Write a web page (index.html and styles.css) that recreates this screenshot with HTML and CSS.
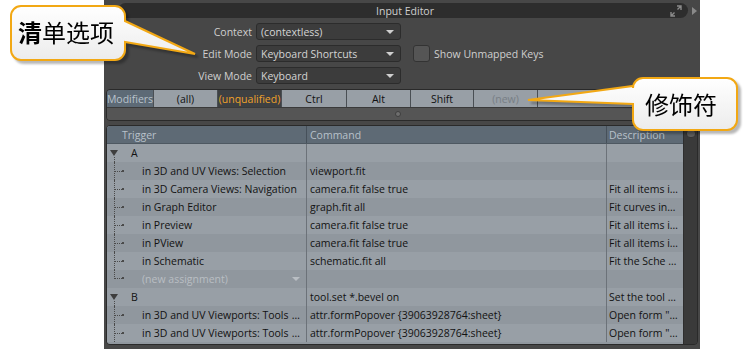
FILE: index.html
```html
<!DOCTYPE html>
<html lang="en">
<head>
  <meta charset="UTF-8">
  <title>Input Editor</title>
  <link rel="stylesheet" href="styles.css">
</head>
<body>
  <div class="stage">
    <div class="panel">
      <div class="titlewrap">
        <div class="titlebar">
          <span class="title">Input Editor</span>
          <svg class="expand" width="12" height="12" viewBox="0 0 12 12">
            <path d="M7 1h4v4M11 1L7.5 4.5M5 11H1V7M1 11l3.5-3.5" fill="none" stroke="#8a8a8a" stroke-width="1.4"/>
          </svg>
        </div>
        <span class="tb-arrow"></span>
      </div>

      <div class="fields">
        <label class="flabel">Context</label>
        <div class="dropdown">(contextless)<span class="caret"></span></div>
        <span></span>

        <label class="flabel">Edit Mode</label>
        <div class="dropdown">Keyboard Shortcuts<span class="caret"></span></div>
        <div class="check"><span class="box"></span>Show Unmapped Keys</div>

        <label class="flabel">View Mode</label>
        <div class="dropdown">Keyboard<span class="caret"></span></div>
        <span></span>
      </div>

      <div class="modbox">
        <div class="modrow">
          <span class="mod head">Modifiers</span>
          <span class="mod w64">(all)</span>
          <span class="mod w64 active">(unqualified)</span>
          <span class="mod w65">Ctrl</span>
          <span class="mod w64">Alt</span>
          <span class="mod w63">Shift</span>
          <span class="mod w64 muted">(new)</span>
          <span class="mod rest"></span>
        </div>
        <div class="splitter"><span class="knob"></span></div>
      </div>

      <div class="table">
        <div class="grid">
          <div class="row header">
            <span class="cell trig">Trigger</span>
            <span class="cell cmd">Command</span>
            <span class="cell desc">Description</span>
          </div>

          <div class="row light">
            <span class="cell trig"><span class="exp"><span class="tri"></span></span><span class="key">A</span></span>
            <span class="cell cmd"></span>
            <span class="cell desc"></span>
          </div>
          <div class="row dark">
            <span class="cell trig"><span class="branch"></span><span class="name">in 3D and UV Views: Selection</span></span>
            <span class="cell cmd">viewport.fit</span>
            <span class="cell desc"></span>
          </div>
          <div class="row light">
            <span class="cell trig"><span class="branch"></span><span class="name">in 3D Camera Views: Navigation</span></span>
            <span class="cell cmd">camera.fit false true</span>
            <span class="cell desc">Fit all items i…</span>
          </div>
          <div class="row dark">
            <span class="cell trig"><span class="branch"></span><span class="name">in Graph Editor</span></span>
            <span class="cell cmd">graph.fit all</span>
            <span class="cell desc">Fit curves in…</span>
          </div>
          <div class="row light">
            <span class="cell trig"><span class="branch"></span><span class="name">in Preview</span></span>
            <span class="cell cmd">camera.fit false true</span>
            <span class="cell desc">Fit all items i…</span>
          </div>
          <div class="row dark">
            <span class="cell trig"><span class="branch"></span><span class="name">in PView</span></span>
            <span class="cell cmd">camera.fit false true</span>
            <span class="cell desc">Fit all items i…</span>
          </div>
          <div class="row light">
            <span class="cell trig"><span class="branch"></span><span class="name">in Schematic</span></span>
            <span class="cell cmd">schematic.fit all</span>
            <span class="cell desc">Fit the Sche …</span>
          </div>
          <div class="row dark">
            <span class="cell trig"><span class="branch last"></span><span class="name ghost">(new assignment)</span><span class="mini-caret"></span></span>
            <span class="cell cmd"></span>
            <span class="cell desc"></span>
          </div>
          <div class="row light">
            <span class="cell trig"><span class="exp"><span class="tri"></span></span><span class="key">B</span></span>
            <span class="cell cmd">tool.set *.bevel on</span>
            <span class="cell desc">Set the tool …</span>
          </div>
          <div class="row dark">
            <span class="cell trig"><span class="branch"></span><span class="name">in 3D and UV Viewports: Tools</span><span class="more">…</span></span>
            <span class="cell cmd">attr.formPopover {39063928764:sheet}</span>
            <span class="cell desc">Open form "…</span>
          </div>
          <div class="row light">
            <span class="cell trig"><span class="branch"></span><span class="name">in 3D and UV Viewports: Tools</span><span class="more">…</span></span>
            <span class="cell cmd">attr.formPopover {39063928764:sheet}</span>
            <span class="cell desc">Open form "…</span>
          </div>
        </div>
        <div class="scroll"><span class="scroll-btn"></span></div>
      </div>
    </div>

    <!-- callouts -->
    <div class="callout left-callout">
      <svg width="210" height="75" viewBox="0 0 210 75">
        <defs>
          <linearGradient id="cg1" x1="0" y1="0" x2="0" y2="1">
            <stop offset="0" stop-color="#ffffff"/>
            <stop offset="1" stop-color="#ececec"/>
          </linearGradient>
        </defs>
        <path d="M21 6H115A10 10 0 0 1 125 16V21L195 54L125 42V50A10 10 0 0 1 115 60H21A10 10 0 0 1 11 50V16A10 10 0 0 1 21 6Z" fill="url(#cg1)" stroke="#f2a814" stroke-width="2"/>
      </svg>
      <span class="ctext"><b>清</b>单选项</span>
    </div>

    <div class="callout right-callout">
      <svg width="222" height="62" viewBox="0 0 222 62">
        <defs>
          <linearGradient id="cg2" x1="0" y1="0" x2="0" y2="1">
            <stop offset="0" stop-color="#ffffff"/>
            <stop offset="1" stop-color="#ececec"/>
          </linearGradient>
        </defs>
        <path d="M116 2H200A10 10 0 0 1 210 12V44A10 10 0 0 1 200 54H116A10 10 0 0 1 106 44V28L1 24L106 10V12A10 10 0 0 1 116 2Z" fill="url(#cg2)" stroke="#f2a814" stroke-width="2"/>
      </svg>
      <span class="ctext">修饰符</span>
    </div>
  </div>
</body>
</html>
```

FILE: styles.css
```css
:root {
  --panel: #474747;
  --bar: #2d2d2d;
  --edge: #2a2a2a;
  --label: #cfcfcf;
  --row-light: #989fa6;
  --row-dark: #90979e;
  --header: #5e6a75;
  --accent: #f0a22a;
}

* {
  box-sizing: border-box;
}

body {
  margin: 0;
  background: #ffffff;
  overflow: hidden;
  font-family: 'Open Sans', 'Noto Sans', sans-serif;
  font-size: 10.5px;
}

.stage {
  position: relative;
  width: 749px;
  height: 349px;
}

.panel {
  margin-left: 104px;
  width: 596px;
  height: 349px;
  background: var(--panel);
  overflow: hidden;
}

/* title bar */
.titlewrap {
  display: flex;
  align-items: center;
  padding: 3px 0 0 14px;
}

.titlebar {
  width: 570px;
  height: 15px;
  border-radius: 8px;
  background: var(--bar);
  display: flex;
  align-items: center;
  color: var(--label);
}

.title {
  flex: 1;
  text-align: center;
  padding-left: 22px;
}

.expand {
  margin-right: 6px;
}

.tb-arrow {
  margin-left: 4px;
  width: 0;
  height: 0;
  border-top: 4px solid transparent;
  border-bottom: 4px solid transparent;
  border-left: 5px solid #8a8a8a;
}

/* fields */
.fields {
  margin-top: 5px;
  display: grid;
  grid-template-columns: 148px 145px auto;
  grid-auto-rows: 17px;
  row-gap: 5px;
  column-gap: 4px;
  align-items: center;
  color: var(--label);
}

.flabel {
  text-align: right;
}

.dropdown {
  height: 17px;
  display: flex;
  align-items: center;
  justify-content: space-between;
  padding: 0 6px 0 4px;
  background: #3c3c3c;
  border: 1px solid #2c2c2c;
  border-radius: 3px;
  color: #d4d4d4;
}

.caret {
  width: 0;
  height: 0;
  border-left: 4px solid transparent;
  border-right: 4px solid transparent;
  border-top: 4px solid #cfcfcf;
}

.check {
  display: flex;
  align-items: center;
  gap: 4px;
  margin-left: 8px;
}

.box {
  width: 17px;
  height: 17px;
  background: #555555;
  border: 1px solid #333333;
  border-radius: 3px;
}

/* modifiers */
.modbox {
  margin: 5px 10px 0 2px;
  border: 1px solid var(--edge);
  border-radius: 4px;
  overflow: hidden;
}

.modrow {
  display: flex;
  height: 17px;
}

.mod {
  display: flex;
  align-items: center;
  justify-content: center;
  background: var(--row-light);
  border-right: 1px solid #4a4f54;
  color: #111;
  white-space: nowrap;
}

.mod.head {
  width: 47px;
  background: #5d6a76;
  color: #b9c3cc;
}

.w63 { width: 63px; }
.w64 { width: 64px; }
.w65 { width: 65px; }

.mod.active {
  background: #3d4043;
  color: var(--accent);
}

.mod.muted {
  color: #777e85;
}

.mod.rest {
  flex: 1;
  border-right: none;
}

.splitter {
  height: 13px;
  background: #555555;
  border-top: 1px solid #3a3a3a;
  display: flex;
  align-items: center;
  justify-content: center;
}

.knob {
  width: 6px;
  height: 6px;
  border-radius: 50%;
  background: #6e6e6e;
  border: 1px solid #3e3e3e;
}

/* table */
.table {
  margin: 4px 2px 0 2px;
  height: 220px;
  display: flex;
  border: 1px solid var(--edge);
  border-radius: 4px;
  overflow: hidden;
}

.grid {
  width: 576px;
  background: var(--row-dark);
}

.scroll {
  flex: 1;
  background: #3a3a3a;
  border-left: 1px solid #2e2e2e;
  display: flex;
  justify-content: center;
  padding-top: 3px;
}

.scroll-btn {
  width: 10px;
  height: 9px;
  border-radius: 4px;
  background: #5c5c5c;
  border: 1px solid #333;
}

.row {
  display: grid;
  grid-template-columns: 200px 300px 1fr;
  height: 18px;
  color: #121212;
}

.row.light { background: var(--row-light); }
.row.dark { background: var(--row-dark); }

.row.header {
  background: var(--header);
  color: #b8c1ca;
  border-bottom: 1px solid #4e5861;
}

.cell {
  display: flex;
  align-items: center;
  white-space: nowrap;
  overflow: hidden;
}

.cell.trig {
  padding-left: 3px;
  border-right: 1px solid #6c7279;
}

.cell.cmd {
  padding-left: 3px;
  border-right: 1px solid #6c7279;
}

.cell.desc {
  padding-left: 2px;
}

.header .trig { padding-left: 15px; }
.header .trig,
.header .cmd { border-right-color: #46505a; }

/* tree */
.exp {
  width: 8px;
  height: 18px;
  display: flex;
  flex-direction: column;
  align-items: center;
}

.tri {
  margin-top: 6px;
  width: 0;
  height: 0;
  border-left: 4px solid transparent;
  border-right: 4px solid transparent;
  border-top: 6px solid #3e3e3e;
}

.exp::after {
  content: "";
  flex: 1;
  margin-top: 1px;
  border-left: 1px dotted #4a4a4a;
}

.key {
  margin-left: 13px;
}

.branch {
  margin-left: 4px;
  width: 10px;
  height: 18px;
  border-left: 1px dotted #4a4a4a;
  display: flex;
  align-items: center;
}

.branch::before {
  content: "";
  width: 7px;
  border-top: 1px dotted #4a4a4a;
}

.branch::after {
  content: "";
  width: 2px;
  height: 2px;
  background: #4a4a4a;
}

.branch.last {
  height: 9px;
  align-self: flex-start;
  align-items: flex-end;
}

.name {
  margin-left: 18px;
  flex: 1;
}

.name.ghost {
  color: #b9bec3;
}

.mini-caret {
  margin-right: 6px;
  width: 0;
  height: 0;
  border-left: 4px solid transparent;
  border-right: 4px solid transparent;
  border-top: 4px solid #b9bec3;
}

.more {
  margin-right: 6px;
}

/* callouts */
.callout {
  position: absolute;
  filter: drop-shadow(3px 3px 1px rgba(0, 0, 0, 0.28));
}

.callout svg {
  display: block;
}

.ctext {
  position: absolute;
  font-family: 'Noto Sans CJK SC', sans-serif;
  font-size: 24px;
  line-height: 1;
  color: #000;
}

.ctext b {
  font-weight: 700;
}

.left-callout {
  left: 0;
  top: 0;
}

.left-callout .ctext {
  left: 18px;
  top: 20px;
}

.right-callout {
  left: 527px;
  top: 76px;
}

.right-callout .ctext {
  left: 118px;
  top: 16px;
}
```
